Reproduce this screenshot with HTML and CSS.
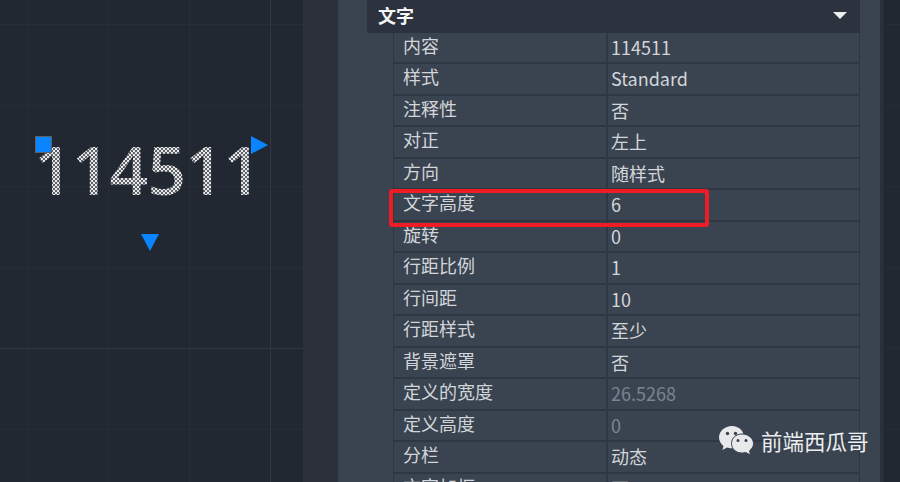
FILE: index.html
```html
<!DOCTYPE html>
<html lang="zh-CN">
<head>
    <meta charset="UTF-8">
    <title>文字特性</title>
    <link rel="stylesheet" href="styles.css">
</head>
<body>
    <div class="screen">
        <div class="canvas">
            <div class="mtext">114511</div>
            <div class="grip-square"></div>
            <svg class="grip-right" width="17" height="18" viewBox="0 0 17 18"><path d="M0 0L17 9L0 18Z"/></svg>
            <svg class="grip-down" width="18" height="17" viewBox="0 0 18 17"><path d="M0 0H18L9 17Z"/></svg>
        </div>
        <div class="strip"></div>
        <div class="panel">
            <div class="group">
                <div class="group-head">
                    <span>文字</span>
                    <svg width="14" height="7" viewBox="0 0 14 7"><path d="M0 0H14L7 7Z"/></svg>
                </div>
                <div class="rows">
                    <div class="row"><div class="name">内容</div><div class="value">114511</div></div>
                    <div class="row"><div class="name">样式</div><div class="value">Standard</div></div>
                    <div class="row"><div class="name">注释性</div><div class="value">否</div></div>
                    <div class="row"><div class="name">对正</div><div class="value">左上</div></div>
                    <div class="row"><div class="name">方向</div><div class="value">随样式</div></div>
                    <div class="row"><div class="name">文字高度</div><div class="value">6</div></div>
                    <div class="row"><div class="name">旋转</div><div class="value">0</div></div>
                    <div class="row"><div class="name">行距比例</div><div class="value">1</div></div>
                    <div class="row"><div class="name">行间距</div><div class="value">10</div></div>
                    <div class="row"><div class="name">行距样式</div><div class="value">至少</div></div>
                    <div class="row"><div class="name">背景遮罩</div><div class="value">否</div></div>
                    <div class="row"><div class="name">定义的宽度</div><div class="value disabled">26.5268</div></div>
                    <div class="row"><div class="name">定义高度</div><div class="value disabled">0</div></div>
                    <div class="row"><div class="name">分栏</div><div class="value">动态</div></div>
                    <div class="row"><div class="name">文字加框</div><div class="value">否</div></div>
                </div>
            </div>
        </div>
        <div class="strip-thin"></div>
        <div class="canvas-rest"></div>

        <div class="highlight"></div>
        <div class="watermark">
            <svg width="35" height="31" viewBox="0 0 35 31">
                <path class="bubble-back" d="M13 1C6 1 0 6 0 12.500C0 16 2 19 4.500 21L3.500 25L8 22.500C9.500 23 11 23.300 13 23.300C20 23.300 25 18.500 25 12.500C25 6 20 1 13 1Z"/>
                <circle class="eye-back" cx="8.500" cy="8.500" r="1.700"/>
                <circle class="eye-back" cx="16.500" cy="8.500" r="1.700"/>
                <path class="bubble-front" d="M23 9C16.500 9 12.500 13.500 12.500 18.500C12.500 24 17 28 23 28C24.500 28 25.500 27.800 26.500 27.400L31.500 30L30.500 25.800C33 23.800 34.500 21.500 34.500 18.500C34.500 13.500 29.500 9 23 9Z"/>
                <circle class="eye-front" cx="19" cy="15.500" r="1.500"/>
                <circle class="eye-front" cx="27" cy="15.500" r="1.500"/>
            </svg>
            <span>前端西瓜哥</span>
        </div>
    </div>
</body>
</html>
```

FILE: styles.css
```css
* {
    box-sizing: border-box;
}
html, body {
    margin: 0;
    height: 100%;
    overflow: hidden;
    background-color: #222831;
}
body {
    font-family: "Noto Sans CJK SC", "Noto Sans", sans-serif;
}
.screen {
    position: relative;
    display: flex;
    width: 900px;
    height: 482px;
    overflow: hidden;
}

/* drawing area */
.canvas, .canvas-rest {
    position: relative;
    background-color: #222831;
    background-image:
        linear-gradient(#272d38 1px, transparent 1px),
        linear-gradient(90deg, #272d38 1px, transparent 1px);
    background-size: 81px 81px;
}
.canvas {
    width: 303px;
    background-position: 0 24px, 27px 0;
}
.canvas::before {
    content: "";
    position: absolute;
    top: 0;
    bottom: 0;
    left: 270px;
    width: 1px;
    background-color: #2f3644;
}
.canvas::after {
    content: "";
    position: absolute;
    left: 0;
    right: 0;
    top: 348px;
    height: 1px;
    background-color: #2f3644;
}
.canvas-rest {
    flex: 1;
    background-position: 0 24px, 0 0;
}
.mtext {
    position: absolute;
    left: 34px;
    top: 123px;
    font-family: "Open Sans", "Liberation Sans", sans-serif;
    font-size: 67.500px;
    font-weight: 600;
    line-height: 92px;
    letter-spacing: -0.8px;
    color: transparent;
    background-color: #555a61;
    background-image:
        radial-gradient(circle at center, #e8e8e8 1.100px, transparent 1.600px),
        radial-gradient(circle at center, #e8e8e8 1.100px, transparent 1.600px);
    background-size: 4px 4px;
    background-position: 0 0, 2px 2px;
    -webkit-background-clip: text;
    background-clip: text;
}
.grip-square {
    position: absolute;
    left: 35px;
    top: 136px;
    width: 17px;
    height: 17px;
    background-color: #0a84ff;
    border: 1px solid #5c6168;
}
.grip-right {
    position: absolute;
    left: 251px;
    top: 136px;
    fill: #0a84ff;
}
.grip-down {
    position: absolute;
    left: 141px;
    top: 234px;
    fill: #0a84ff;
}

/* properties panel */
.strip {
    width: 35px;
    background-color: #2b303a;
}
.strip-thin {
    width: 3px;
    background-color: #2b303a;
}
.panel {
    width: 542px;
    padding: 0 20px 0 28px;
    background-color: #3a4350;
    border-left: 1px solid #343c48;
}
.group-head {
    display: flex;
    align-items: center;
    justify-content: space-between;
    height: 33px;
    padding: 0 13px 3px 11px;
    background-color: #2d333e;
    color: #f4f5f6;
    font-size: 18px;
    font-weight: 700;
}
.group-head svg {
    fill: #eceef0;
}
.rows {
    margin-left: 26px;
    border-left: 1px solid #2f3641;
}
.row {
    display: flex;
    height: 31.47px;
    border-bottom: 2px solid #303743;
    border-right: 1px solid #2f3641;
    color: #d2d6da;
    font-size: 18px;
    line-height: 24px;
}
.name {
    width: 214px;
    padding-left: 9px;
    border-right: 2px solid #303743;
}
.value {
    padding: 2px 0 0 3px;
}
.disabled {
    color: #7c8490;
}

/* things on top of the screenshot */
.highlight {
    position: absolute;
    left: 389px;
    top: 189px;
    width: 320px;
    height: 38px;
    border: 4px solid #ee1c25;
    border-radius: 3px;
}
.watermark {
    position: absolute;
    left: 719px;
    top: 425px;
    display: flex;
    align-items: center;
    gap: 7px;
    color: #eceef0;
    font-size: 21.500px;
    line-height: 29px;
}
.bubble-back, .bubble-front {
    fill: #e8e9ea;
}
.bubble-front {
    stroke: #3a4350;
    stroke-width: 1;
}
.eye-back, .eye-front {
    fill: #3a4350;
}
```
